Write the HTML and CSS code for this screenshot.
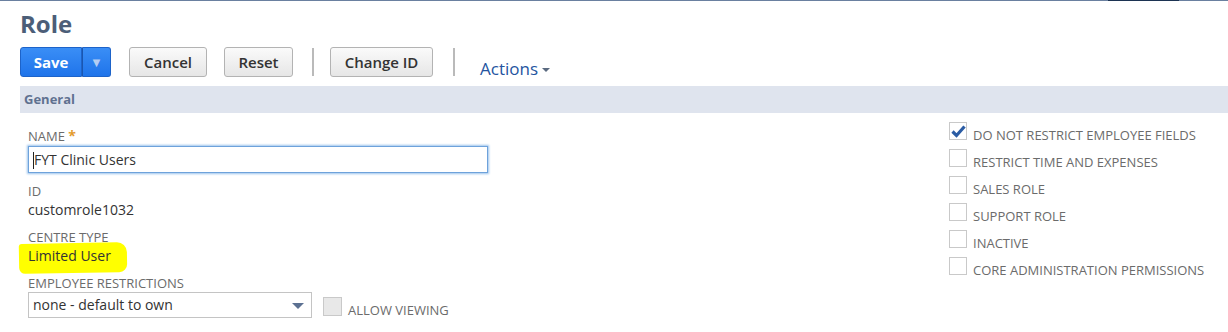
FILE: index.html
```html
<!DOCTYPE html>
<html lang="en">
<head>
    <meta charset="UTF-8">
    <title>Role</title>
    <link rel="stylesheet" href="styles.css">
</head>
<body>
    <div class="topbar"><span class="topbar-left"></span><span class="topbar-active"></span><span class="topbar-right"></span></div>

    <h1 class="page-title">Role</h1>

    <div class="toolbar">
        <div class="btn-split">
            <button class="btn-primary">Save</button>
            <button class="btn-primary btn-caret">&#9660;</button>
        </div>
        <button class="btn btn-cancel">Cancel</button>
        <button class="btn btn-reset">Reset</button>
        <span class="sep"></span>
        <button class="btn btn-changeid">Change ID</button>
        <span class="sep"></span>
        <span class="actions">Actions<span class="actions-caret"></span></span>
    </div>

    <div class="section-head">General</div>

    <div class="form">
        <div class="col-left">
            <div class="field">
                <div class="label">Name <span class="req">*</span></div>
                <div class="input focused"><span class="cursor"></span>FYT Clinic Users</div>
            </div>
            <div class="field">
                <div class="label">ID</div>
                <div class="value">customrole1032</div>
            </div>
            <div class="field">
                <div class="label">Centre Type</div>
                <div class="value"><span class="marker">Limited User</span></div>
            </div>
            <div class="field">
                <div class="label">Employee Restrictions</div>
                <div class="select-row">
                    <div class="select">none - default to own<span class="select-arrow"></span></div>
                    <span class="box grey"></span>
                    <span class="check-label">Allow Viewing</span>
                </div>
            </div>
        </div>

        <div class="col-right">
            <div class="check-row">
                <span class="box">
                    <svg width="15" height="13" viewBox="0 0 15 13"><path d="M1.5 6.5 L5.5 10.5 L13.5 1.5" fill="none" stroke="#2b5ca4" stroke-width="3.2"/></svg>
                </span>
                <span class="check-label">Do not restrict employee fields</span>
            </div>
            <div class="check-row"><span class="box"></span><span class="check-label">Restrict time and expenses</span></div>
            <div class="check-row"><span class="box"></span><span class="check-label">Sales role</span></div>
            <div class="check-row"><span class="box"></span><span class="check-label">Support role</span></div>
            <div class="check-row"><span class="box"></span><span class="check-label">Inactive</span></div>
            <div class="check-row"><span class="box"></span><span class="check-label">Core administration permissions</span></div>
        </div>
    </div>
</body>
</html>
```

FILE: styles.css
```css
body {
    margin: 0;
    font-family: "Open Sans", Arial, sans-serif;
    color: #333;
    background: #fff;
}
.topbar {
    display: flex;
    height: 1px;
}
.topbar-left {
    width: 1108px;
    background: #6a80a0;
}
.topbar-active {
    width: 71px;
    background: #1c3352;
}
.topbar-right {
    flex: 1;
    background: #6a80a0;
}
.page-title {
    margin: 9px 0 0 20px;
    font-size: 24px;
    line-height: 28px;
    font-weight: bold;
    color: #4c5e78;
}
.toolbar {
    display: flex;
    align-items: center;
    height: 30px;
    margin: 9px 0 0 20px;
}
.btn-split {
    display: flex;
    height: 30px;
    margin-right: 18px;
}
.btn-primary {
    height: 30px;
    width: 62px;
    padding: 0;
    border: 1px solid #1d63c9;
    background: linear-gradient(#3a8ef6, #1f74ea);
    color: #fff;
    font-family: "Open Sans", Arial, sans-serif;
    font-size: 15px;
    font-weight: bold;
    border-radius: 3px 0 0 3px;
}
.btn-caret {
    width: 29px;
    border-left: 1px solid #1a56b0;
    border-radius: 0 3px 3px 0;
    font-size: 13px;
    color: #b3cdf3;
}
.btn {
    height: 30px;
    padding: 0;
    margin-right: 17px;
    border: 1px solid #b3b3b3;
    border-radius: 3px;
    background: linear-gradient(#fafafa, #e6e6e6);
    color: #333;
    font-family: "Open Sans", Arial, sans-serif;
    font-size: 15px;
    font-weight: 600;
}
.btn-cancel {
    width: 78px;
}
.btn-reset {
    width: 69px;
    margin-right: 19px;
}
.btn-changeid {
    width: 103px;
    margin-right: 20px;
}
.sep {
    width: 2px;
    height: 28px;
    background: #bababa;
    margin-right: 16px;
}
.btn-changeid + .sep {
    margin-right: 25px;
}
.actions {
    align-self: flex-end;
    margin-bottom: -3px;
    font-size: 17px;
    line-height: 22px;
    color: #24549f;
}
.actions-caret {
    display: inline-block;
    margin-left: 4px;
    vertical-align: middle;
    border-left: 4px solid transparent;
    border-right: 4px solid transparent;
    border-top: 4px solid #5a6a80;
}
.section-head {
    margin: 9px 0 0 20px;
    height: 27px;
    padding-left: 4px;
    background: #dfe4ee;
    font-size: 13px;
    line-height: 27px;
    font-weight: bold;
    color: #5f7190;
}
.form {
    display: grid;
    grid-template-columns: 921px 1fr;
    padding-left: 28px;
}
.col-left {
    padding-top: 15px;
}
.field {
    margin-bottom: 10px;
}
.label {
    font-size: 13px;
    line-height: 16px;
    text-transform: uppercase;
    color: #6b6b6b;
}
.req {
    color: #e39b2f;
    font-weight: bold;
    font-size: 14px;
}
.value {
    padding-top: 2px;
    font-size: 14px;
    line-height: 18px;
    color: #333;
}
.input {
    width: 454px;
    height: 25px;
    margin-top: 2px;
    padding-left: 4px;
    border: 1px solid #6ea2db;
    box-shadow: 0 0 2px 1px #9cc3ec;
    font-size: 14px;
    line-height: 25px;
    color: #333;
}
.cursor {
    display: inline-block;
    width: 1px;
    height: 17px;
    vertical-align: -4px;
    background: #222;
}
.marker {
    position: relative;
    z-index: 0;
}
.marker::before {
    content: "";
    position: absolute;
    z-index: -1;
    left: -9px;
    right: -16px;
    top: -3px;
    bottom: -8px;
    background: #ffff00;
    border-radius: 3px 10px 8px 6px;
    transform: rotate(-1deg);
}
.select-row {
    display: flex;
    align-items: flex-start;
    margin-top: 1px;
}
.select {
    position: relative;
    width: 278px;
    height: 24px;
    padding-left: 4px;
    border: 1px solid #c4c4c4;
    font-size: 14px;
    line-height: 24px;
    color: #333;
}
.select-arrow {
    position: absolute;
    right: 7px;
    top: 10px;
    border-left: 6px solid transparent;
    border-right: 6px solid transparent;
    border-top: 6px solid #5c7192;
}
.select-row .box {
    margin: 5px 0 0 11px;
}
.select-row .check-label {
    margin-top: 10px;
    line-height: 16px;
}
.col-right {
    padding-top: 3px;
}
.check-row {
    display: flex;
    align-items: flex-end;
    height: 27px;
}
.box {
    display: flex;
    align-items: center;
    justify-content: center;
    width: 16px;
    height: 16px;
    margin-bottom: 3px;
    border: 1px solid #c9c9c9;
    background: #fff;
}
.box.grey {
    background: #e8e8e8;
    width: 17px;
    height: 17px;
}
.check-label {
    margin-left: 6px;
    font-size: 13px;
    line-height: 16px;
    text-transform: uppercase;
    color: #6b6b6b;
}
```
